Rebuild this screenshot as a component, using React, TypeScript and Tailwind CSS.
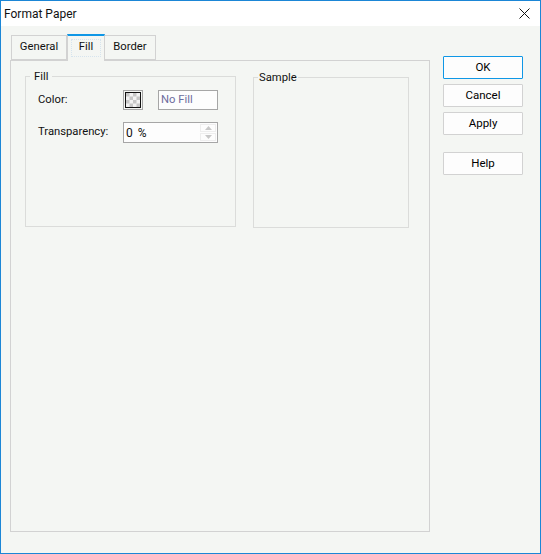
import React from "react";

function Checker() {
  const cells = [];
  for (let y = 0; y < 4; y++) {
    for (let x = 0; x < 4; x++) {
      if ((x + y) % 2 === 0) cells.push(<rect key={`${x}-${y}`} x={x * 3.5} y={y * 3.5} width={3.5} height={3.5} fill="#c6c6c6" />);
    }
  }
  return (
    <svg width="14" height="14" viewBox="0 0 14 14" className="block">
      <rect width="14" height="14" fill="#f2f2f2" />
      {cells}
    </svg>
  );
}

function Btn({ label, primary, className = "" }: { label: string; primary?: boolean; className?: string }) {
  return (
    <button
      className={`w-20 h-[23px] rounded-[1px] border bg-[#fdfdfd] text-[11.5px] leading-[20px] pb-[2px] text-black ${primary ? "border-[#0f97e6]" : "border-[#d2d2d2]"} ${className}`}
    >
      {label}
    </button>
  );
}

function Tab({ label, active, className = "" }: { label: string; active?: boolean; className?: string }) {
  if (active) {
    return (
      <div className={`relative z-10 h-[27px] w-[38px] -mb-px border-x border-[#d2d2d2] border-t-2 border-t-[#0f97e6] bg-[#f4f6f3] flex justify-center pt-[3px] ${className}`}>
        <span className="h-[18px] px-[8px] mt-0 leading-[15px] outline-1 outline-dotted outline-[#d6e4ee] -outline-offset-1">{label}</span>
      </div>
    );
  }
  return (
    <div className={`h-[25px] border border-[#d2d2d2] bg-[#f4f6f3] flex items-center justify-center pb-px ${className}`}>{label}</div>
  );
}

export default function App() {
  return (
    <div className="w-[541px] h-[554px] overflow-hidden flex flex-col border border-[#1b86d6] bg-[#f4f6f3] text-[11.25px] text-[#111] font-['Roboto',sans-serif]">
      <div className="h-[25px] shrink-0 bg-white flex items-center justify-between pl-[3px] pr-[10px]">
        <span className="text-[12px]">Format Paper</span>
        <svg width="11" height="11" viewBox="0 0 11 11" className="block" fill="none" stroke="#111" strokeWidth="1">
          <path d="M0.5 0.5 L10.5 10.5 M10.5 0.5 L0.5 10.5" />
        </svg>
      </div>
      <div className="flex-1 flex pl-[9px] pr-[17px] pt-[8px] pb-[21px]">
        <div className="w-[420px] flex flex-col">
          <div className="flex items-end pl-px">
            <Tab label="General" className="w-[56px]" />
            <Tab label="Fill" active />
            <Tab label="Border" className="w-[52px] -ml-px" />
          </div>
          <div className="flex-1 border border-[#d2d2d2] pl-[14px] pr-[20px] pt-[7px] flex items-start gap-[17px]">
            <fieldset className="w-[211px] h-[159px] border border-[#dbdcda] pl-[12px] pr-[17px]">
              <legend className="-ml-[8px] px-[4px] leading-[16px]"><span className="relative top-[1px]">Fill</span></legend>
              <div className="flex items-center h-[20px] mt-[6px]">
                <span className="w-[85px] shrink-0">Color:</span>
                <div className="w-[20px] h-[20px] border border-[#a6a6a6] p-px shrink-0">
                  <div className="border border-[#111] w-[16px] h-[16px] flex items-center justify-center overflow-hidden bg-[#f4f4f4]">
                    <Checker />
                  </div>
                </div>
                <div className="ml-[15px] w-[60px] h-[20px] border border-[#a6a6a6] bg-[#fdfdfd] text-[#6d6d9e] pl-[2px] flex items-center">No Fill</div>
              </div>
              <div className="flex items-center h-[21px] mt-[12px]">
                <span className="w-[85px] shrink-0">Transparency:</span>
                <div className="w-[95px] h-[21px] shrink-0 border border-[#a6a6a6] bg-[#fdfdfd] pl-[2px] pr-px flex items-center justify-between">
                  <span className="text-[12px] tracking-[1px]">0 %</span>
                  <div className="w-[16px] h-[17px] flex flex-col gap-px">
                    <div className="flex-1 border border-[#eeeeee] flex items-center justify-center">
                      <svg width="7" height="4" viewBox="0 0 7 4" className="block"><path d="M3.5 0 L7 4 L0 4 Z" fill="#c8c8c8" /></svg>
                    </div>
                    <div className="flex-1 border border-[#eeeeee] flex items-center justify-center">
                      <svg width="7" height="4" viewBox="0 0 7 4" className="block"><path d="M0 0 L7 0 L3.5 4 Z" fill="#c8c8c8" /></svg>
                    </div>
                  </div>
                </div>
              </div>
            </fieldset>
            <fieldset className="w-[156px] h-[159px] mt-px border border-[#dbdcda]">
              <legend className="ml-[4px] px-[1px] leading-[16px]"><span className="relative top-[1px]">Sample</span></legend>
            </fieldset>
          </div>
        </div>
        <div className="ml-[13px] pt-[22px] flex flex-col gap-[5px]">
          <Btn label="OK" primary />
          <Btn label="Cancel" />
          <Btn label="Apply" />
          <Btn label="Help" className="mt-[12px]" />
        </div>
      </div>
    </div>
  );
}
